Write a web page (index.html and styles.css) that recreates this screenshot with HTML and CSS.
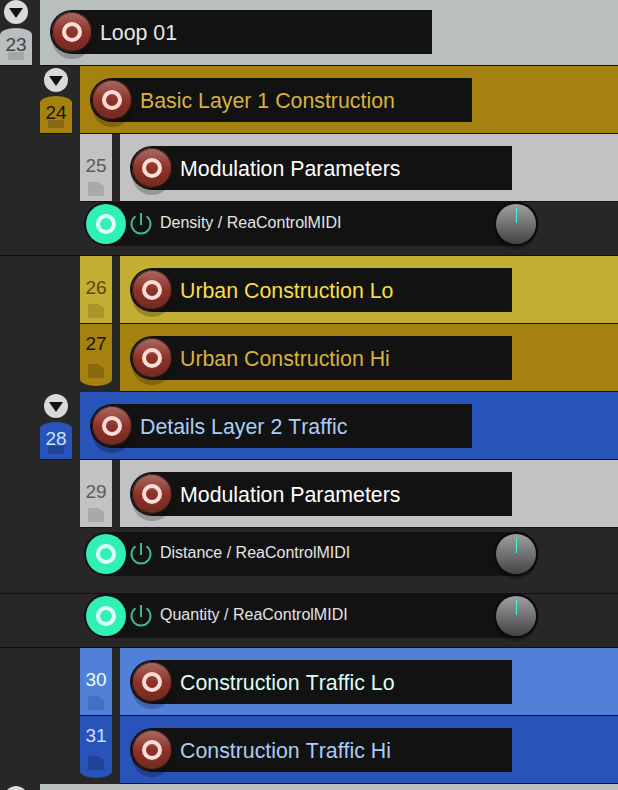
FILE: index.html
```html
<!DOCTYPE html>
<html lang="en">
<head>
    <meta charset="UTF-8">
    <title>Track list</title>
    <link rel="stylesheet" href="styles.css">
</head>
<body>
    <div class="tracks">
        <div class="track loop">
            <div class="side">
                <div class="fold"><span class="arrow"></span></div>
                <div class="tab tab-parent"><span class="num">23</span><span class="folder"></span></div>
            </div>
            <div class="lane">
                <div class="strip"><span class="rec"><span class="dot"></span></span><span class="name">Loop 01</span></div>
            </div>
        </div>

        <div class="track indent-1 ochre">
            <div class="side">
                <div class="fold"><span class="arrow"></span></div>
                <div class="tab tab-parent"><span class="num">24</span><span class="folder"></span></div>
            </div>
            <div class="lane">
                <div class="strip"><span class="rec"><span class="dot"></span></span><span class="name">Basic Layer 1 Construction</span></div>
            </div>
        </div>

        <div class="track indent-2 plain">
            <div class="side">
                <div class="tab"><span class="num">25</span><span class="folder"></span></div>
            </div>
            <div class="lane">
                <div class="strip"><span class="rec"><span class="dot"></span></span><span class="name">Modulation Parameters</span></div>
            </div>
        </div>

        <div class="fx">
            <div class="fx-strip">
                <span class="toggle"><span class="dot"></span></span>
                <svg class="power" width="22" height="24" viewBox="0 0 22 24"><path d="M5.5 4.3a9.5 9.5 0 1 0 11 0M11 1v12"/></svg>
                <span class="fx-name">Density / ReaControlMIDI</span>
                <span class="knob"><span class="tick"></span></span>
            </div>
        </div>

        <div class="track indent-2 gold">
            <div class="side">
                <div class="tab"><span class="num">26</span><span class="folder"></span></div>
            </div>
            <div class="lane">
                <div class="strip"><span class="rec"><span class="dot"></span></span><span class="name">Urban Construction Lo</span></div>
            </div>
        </div>

        <div class="track indent-2 ochre">
            <div class="side">
                <div class="tab tab-last"><span class="num">27</span><span class="folder"></span></div>
            </div>
            <div class="lane">
                <div class="strip"><span class="rec"><span class="dot"></span></span><span class="name">Urban Construction Hi</span></div>
            </div>
        </div>

        <div class="track indent-1 blue">
            <div class="side">
                <div class="fold"><span class="arrow"></span></div>
                <div class="tab tab-parent"><span class="num">28</span><span class="folder"></span></div>
            </div>
            <div class="lane">
                <div class="strip"><span class="rec"><span class="dot"></span></span><span class="name">Details Layer 2 Traffic</span></div>
            </div>
        </div>

        <div class="track indent-2 plain">
            <div class="side">
                <div class="tab"><span class="num">29</span><span class="folder"></span></div>
            </div>
            <div class="lane">
                <div class="strip"><span class="rec"><span class="dot"></span></span><span class="name">Modulation Parameters</span></div>
            </div>
        </div>

        <div class="fx fx-tall">
            <div class="fx-strip">
                <span class="toggle"><span class="dot"></span></span>
                <svg class="power" width="22" height="24" viewBox="0 0 22 24"><path d="M5.5 4.3a9.5 9.5 0 1 0 11 0M11 1v12"/></svg>
                <span class="fx-name">Distance / ReaControlMIDI</span>
                <span class="knob"><span class="tick"></span></span>
            </div>
        </div>

        <div class="fx">
            <div class="fx-strip">
                <span class="toggle"><span class="dot"></span></span>
                <svg class="power" width="22" height="24" viewBox="0 0 22 24"><path d="M5.5 4.3a9.5 9.5 0 1 0 11 0M11 1v12"/></svg>
                <span class="fx-name">Quantity / ReaControlMIDI</span>
                <span class="knob"><span class="tick"></span></span>
            </div>
        </div>

        <div class="track indent-2 sky">
            <div class="side">
                <div class="tab"><span class="num">30</span><span class="folder"></span></div>
            </div>
            <div class="lane">
                <div class="strip"><span class="rec"><span class="dot"></span></span><span class="name">Construction Traffic Lo</span></div>
            </div>
        </div>

        <div class="track indent-2 blue">
            <div class="side">
                <div class="tab tab-last"><span class="num">31</span><span class="folder"></span></div>
            </div>
            <div class="lane">
                <div class="strip"><span class="rec"><span class="dot"></span></span><span class="name">Construction Traffic Hi</span></div>
            </div>
        </div>

        <div class="track track-end loop">
            <div class="side">
                <div class="fold"><span class="arrow"></span></div>
            </div>
            <div class="lane"></div>
        </div>
    </div>
</body>
</html>
```

FILE: styles.css
```css
:root {
    --gutter: #272727;
    --line: #121212;
    --strip: #121212;
}
html, body {
    margin: 0;
    height: 100%;
    overflow: hidden;
    background: var(--gutter);
}
body {
    font-family: "Liberation Sans", Arial, sans-serif;
    font-kerning: none;
}
.tracks {
    margin-top: -2px;
}

/* track rows */
.track {
    display: flex;
    height: 68px;
    gap: 8px;
}
.track-end {
    height: 6px;
    overflow: hidden;
}
.indent-1 { padding-left: 40px; }
.indent-2 { padding-left: 80px; }

.loop  { --lane: #b8bfbe; --ink: #e6e8e8; --num: #3c4649; --folder: #a1a8a8; }
.ochre { --lane: #a5820f; --ink: #d8b23c; --num: #1e1204; --folder: #876a0e; }
.plain { --lane: #c2c2c2; --ink: #ffffff; --num: #5c5c5c; --folder: #a9a9a9; }
.gold  { --lane: #c3ad33; --ink: #f6de48; --num: #5a4a0e; --folder: #a8952b; }
.blue  { --lane: #2853b8; --ink: #a9cdf5; --num: #c4e2ff; --folder: #1f4396; }
.sky   { --lane: #5180d9; --ink: #dcfdf6; --num: #eafff9; --folder: #4670bf; }

.side {
    width: 32px;
    display: flex;
    flex-direction: column;
    align-items: center;
    flex: none;
}
.lane {
    flex: 1;
    background: var(--lane);
    border-bottom: 1px solid var(--line);
    box-sizing: border-box;
    padding-top: 12px;
}

/* collapse button */
.fold {
    width: 24px;
    height: 24px;
    margin: 2px 0 4px;
    flex: none;
    border-radius: 50%;
    background: #d9d9d9;
    display: flex;
    justify-content: center;
    align-items: center;
}
.arrow {
    width: 0;
    height: 0;
    margin-top: 2px;
    border-left: 7px solid transparent;
    border-right: 7px solid transparent;
    border-top: 10px solid #121212;
}

/* number tab */
.tab {
    width: 32px;
    flex: 1;
    box-sizing: border-box;
    padding-top: 22px;
    display: flex;
    flex-direction: column;
    align-items: center;
    background: var(--lane);
    border-bottom: 1px solid var(--line);
}
.tab-parent {
    padding-top: 7px;
    border-radius: 16px 16px 0 0 / 7px 7px 0 0;
}
.tab-last {
    flex: none;
    height: 62px;
    padding-top: 10px;
    border-bottom: none;
    border-radius: 0 0 16px 16px / 0 0 7px 7px;
}
.num {
    position: relative;
    z-index: 1;
    font-size: 19px;
    line-height: 20px;
    color: var(--num);
}
.folder {
    width: 16px;
    height: 14px;
    margin-top: 6px;
    background: var(--folder);
    clip-path: polygon(0 0, 60% 0, 100% 28%, 100% 100%, 0 100%);
}
.tab-parent .folder {
    height: 8px;
    margin-top: -3px;
    clip-path: none;
}
.tab-last .folder {
    margin-top: 10px;
}

/* name strip */
.strip {
    display: flex;
    align-items: center;
    box-sizing: border-box;
    height: 44px;
    width: 360px;
    margin-left: 32px;
    background: var(--strip);
}
.rec {
    width: 40px;
    height: 40px;
    margin-left: -20px;
    flex: none;
    border-radius: 50%;
    background: linear-gradient(#aa6a64, #8d3229 50%, #6f2a20);
    box-shadow: 0 0 0 2px #121212, inset 0 0 0 1px rgba(0, 0, 0, 0.7), 0 7px 0 0 rgba(0, 0, 0, 0.22);
    display: flex;
    justify-content: center;
    align-items: center;
}
.dot {
    box-sizing: border-box;
    width: 20px;
    height: 20px;
    border: 4px solid #ffdcd6;
    border-radius: 50%;
}
.name {
    margin: 2px 0 0 8px;
    font-size: 21.33px;
    color: var(--ink);
    white-space: nowrap;
}

/* fx rows */
.fx {
    box-sizing: border-box;
    height: 54px;
    border-bottom: 1px solid var(--line);
}
.fx-tall {
    height: 66px;
    padding-top: 4px;
}
.fx-strip {
    display: flex;
    align-items: center;
    height: 44px;
    width: 410px;
    margin-left: 106px;
    background: var(--strip);
}
.toggle {
    width: 40px;
    height: 40px;
    margin-left: -20px;
    flex: none;
    border-radius: 50%;
    background: #30f0b6;
    box-shadow: 0 0 0 2px #121212;
    display: flex;
    justify-content: center;
    align-items: center;
}
.toggle .dot {
    border-color: #e2fff7;
}
.power {
    margin-left: 4px;
    flex: none;
}
.power path {
    fill: none;
    stroke: #40b898;
    stroke-width: 2;
}
.fx-name {
    margin: 0 0 2px 8px;
    font-size: 16px;
    color: #e4e4e4;
    white-space: nowrap;
}
.knob {
    width: 40px;
    height: 40px;
    margin-left: auto;
    margin-right: -20px;
    flex: none;
    border-radius: 50%;
    background: linear-gradient(#a0a0a0, #444444);
    box-shadow: 0 0 0 2.5px #0c0c0c, 0 5px 0 1px rgba(0, 0, 0, 0.18);
    display: flex;
    justify-content: center;
}
.tick {
    width: 1px;
    height: 15px;
    margin-top: 4px;
    background: #3ff5e0;
}
```
